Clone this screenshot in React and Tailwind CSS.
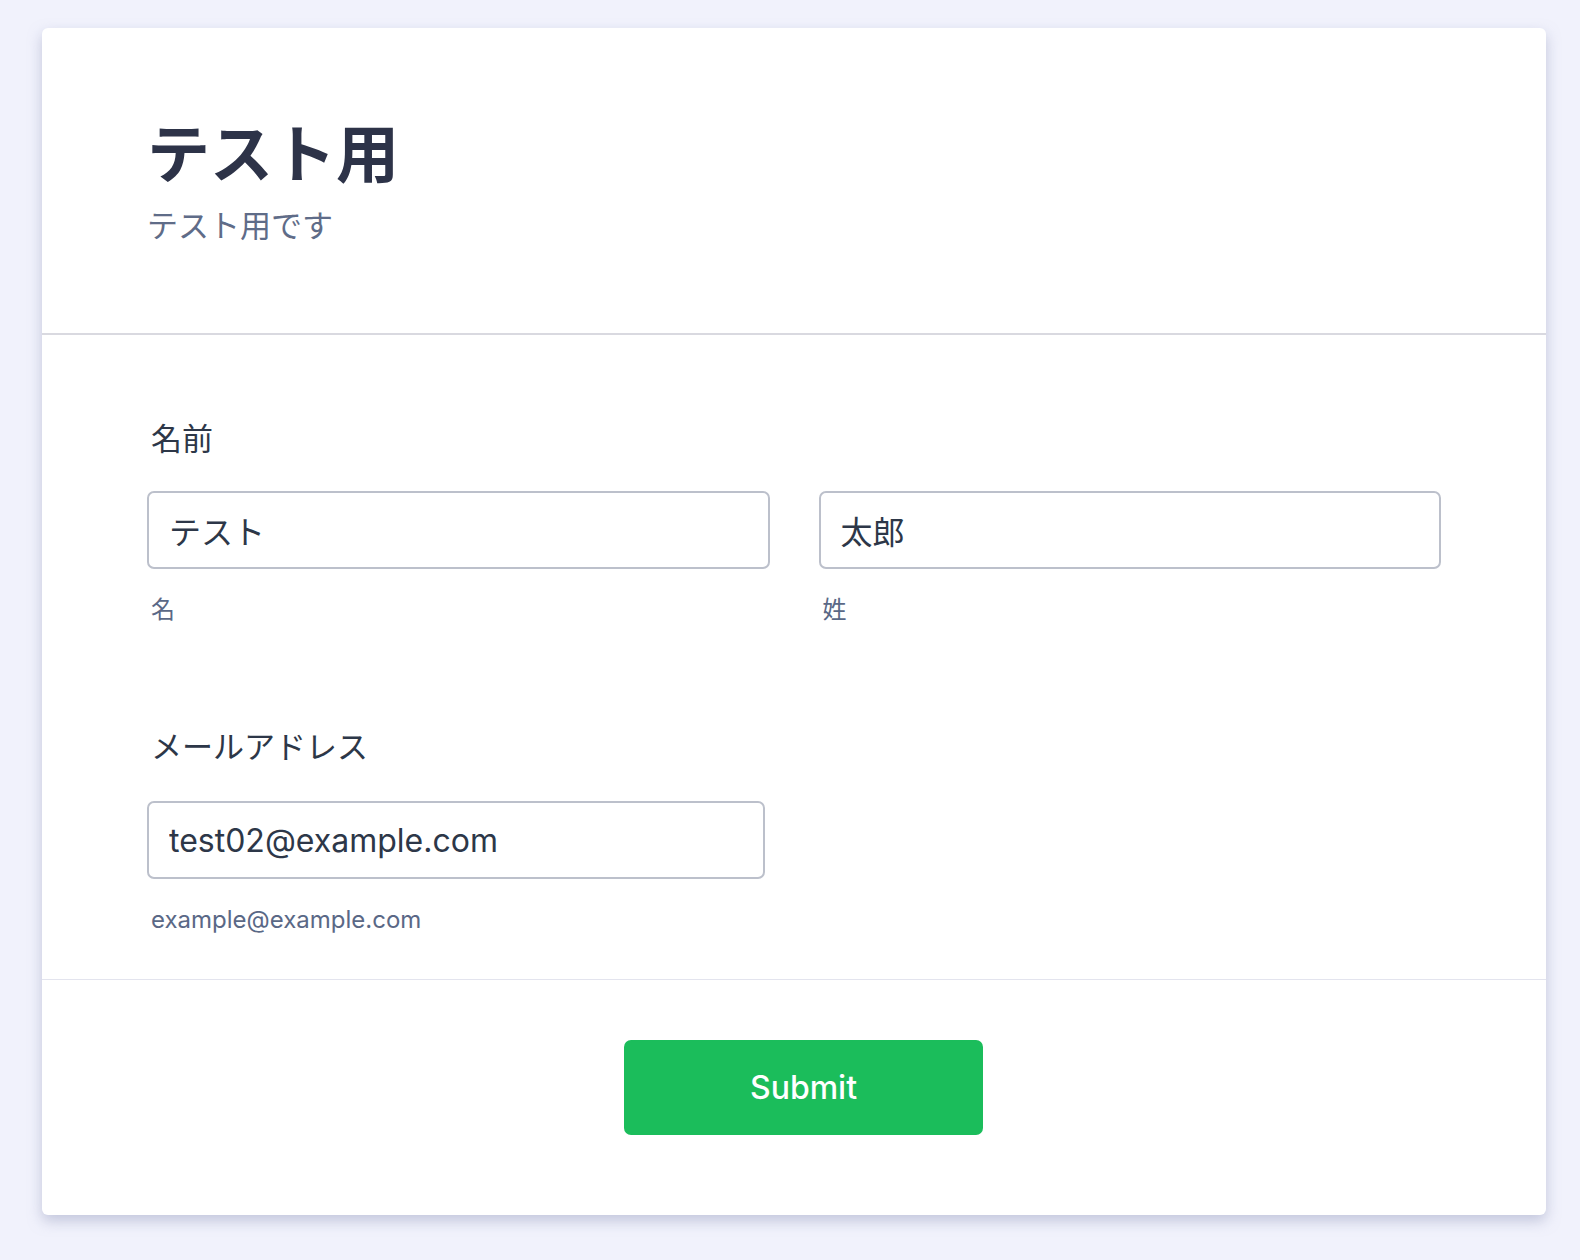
import React, { useState } from 'react';

const font = "font-['Inter','Noto_Sans_CJK_JP',sans-serif]";

const Field = ({ value, onChange, help, className = '' }) => (
    <div className={className}>
        <input
            type="text"
            value={value}
            onChange={onChange}
            className="block w-full h-[78px] border-2 border-[#bcc0cb] rounded-[7px] px-[20px] text-[32px] text-[#2d3748] outline-none bg-white"
        />
        <p className="mt-[29px] pl-[4px] text-[24px] leading-none text-[#5a6886]">{help}</p>
    </div>
);

const App = () => {
    const [formData, setFormData] = useState({
        firstName: 'テスト',
        lastName: '太郎',
        email: 'test02@example.com'
    });

    const handleChange = (name) => (e) => {
        const { value } = e.target;
        setFormData(prev => ({ ...prev, [name]: value }));
    };

    return (
        <div className={`min-h-[1260px] bg-[#f1f2fc] pt-[28px] pl-[42px] pr-[34px] pb-[44px] ${font}`}>
            <form
                onSubmit={(e) => e.preventDefault()}
                className="bg-white rounded-[6px] shadow-[0_6px_14px_rgba(150,155,190,0.5)]"
            >
                {/* ヘッダー */}
                <div className="px-[105px] pt-[95px] pb-[92px] border-b-2 border-[#d9d9e0]">
                    <h1 className="text-[63px] leading-none font-bold text-[#2d3348]">テスト用</h1>
                    <p className="mt-[24px] text-[31px] leading-none text-[#5f6c88]">テスト用です</p>
                </div>

                {/* フォーム本体 */}
                <div className="px-[105px] pt-[88px] pb-[47px] border-b border-[#e3e4ee]">
                    <label className="block pl-[4px] text-[31px] leading-none text-[#2d3748]">名前</label>
                    <div className="grid grid-cols-2 gap-[49px] mt-[37px]">
                        <Field value={formData.firstName} onChange={handleChange('firstName')} help="名" />
                        <Field value={formData.lastName} onChange={handleChange('lastName')} help="姓" />
                    </div>

                    <label className="block mt-[109px] pl-[4px] text-[31px] leading-none text-[#2d3748]">メールアドレス</label>
                    <Field
                        className="mt-[39px] w-[618px]"
                        value={formData.email}
                        onChange={handleChange('email')}
                        help="example@example.com"
                    />
                </div>

                {/* 送信 */}
                <div className="flex justify-center pl-[19px] pt-[60px] pb-[80px]">
                    <button
                        type="submit"
                        className="w-[359px] h-[95px] bg-[#1bbd5b] rounded-[7px] text-white text-[32px] font-medium"
                    >
                        Submit
                    </button>
                </div>
            </form>
        </div>
    );
};

export default App;
